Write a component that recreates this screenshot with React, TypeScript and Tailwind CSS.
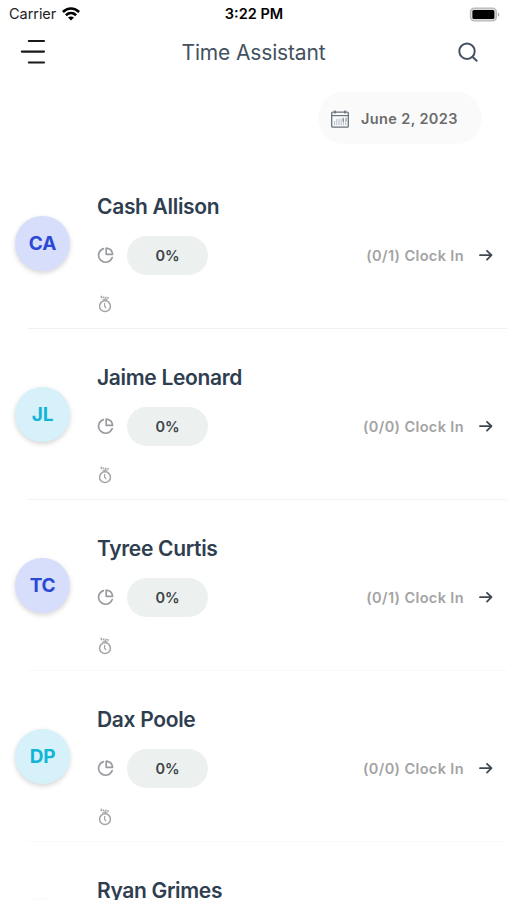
type Employee = {
  name: string
  initials: string
  clock: string
  avatar: string
  divider: string
}

const blue = 'bg-[#d6defb] text-[#2b48d4]'
const cyan = 'bg-[#d6f1fa] text-[#12b5d6]'

const employees: Employee[] = [
  { name: 'Cash Allison', initials: 'CA', clock: '(0/1) Clock In', avatar: blue, divider: 'bg-[#f0f0f0]' },
  { name: 'Jaime Leonard', initials: 'JL', clock: '(0/0) Clock In', avatar: cyan, divider: 'bg-[#f2f2f2]' },
  { name: 'Tyree Curtis', initials: 'TC', clock: '(0/1) Clock In', avatar: blue, divider: 'bg-[#f9f9f9]' },
  { name: 'Dax Poole', initials: 'DP', clock: '(0/0) Clock In', avatar: cyan, divider: 'bg-[#fafafa]' },
  { name: 'Ryan Grimes', initials: 'RG', clock: '(0/1) Clock In', avatar: blue, divider: 'bg-[#fafafa]' },
]

const WifiIcon = () => (
  <svg width="18" height="14" viewBox="0 0 18 14" fill="none" stroke="#000" strokeWidth="2.6">
    <path d="M.9 5C5.6.3 12.4.3 17.1 5" />
    <path d="M3.9 8.2c3-2.8 7.2-2.8 10.2 0" />
    <path d="M9 13.6 6 10.6c1.7-1.5 4.3-1.5 6 0Z" fill="#000" stroke="none" />
  </svg>
)

const BatteryIcon = () => (
  <svg width="31" height="15" viewBox="0 0 31 15">
    <rect x="1.4" y="1.1" width="26" height="12.8" rx="4" fill="#d9d9d9" stroke="#b8b8b8" strokeWidth="1.2" />
    <rect x="3.4" y="3" width="22" height="9" rx="1.6" fill="#000" />
    <path d="M28.9 5.2c1.8.8 1.8 3.8 0 4.6Z" fill="#a8a8a8" />
  </svg>
)

const MenuIcon = () => (
  <svg width="26" height="26" viewBox="0 0 26 26" stroke="#17191c" strokeWidth="2.1" strokeLinecap="round">
    <path d="M8.8 2h15.2M1.8 12.6H24M8.8 23.5h15.2" />
  </svg>
)

const SearchIcon = () => (
  <svg width="20" height="20" viewBox="0 0 20 20" fill="none" stroke="#435160" strokeWidth="2">
    <circle cx="9" cy="9.2" r="7.7" />
    <path d="m14.5 14.8 4.1 3.9" strokeLinecap="round" />
  </svg>
)

const CalendarIcon = () => (
  <svg width="18" height="18" viewBox="0 0 18 18" fill="none" stroke="#66727d">
    <rect x="0.7" y="2.2" width="16.6" height="15" rx="1" strokeWidth="1.3" />
    <path d="M.6 5.6h16.8" strokeWidth="1.2" />
    <path d="M4 .5v3M14 .5v3" strokeWidth="1.6" />
    <path d="M3.6 11v4.2M5.8 9v6.2M8 8.4v6.8M10.2 8.4v6.8M12.4 8.4v6.8M14.6 12.5v2.7" strokeWidth="1.1" stroke="#bcc4ca" />
    <path d="M12.2 7.8v4M15 7.8v4" strokeWidth=".9" />
  </svg>
)

const PieIcon = () => (
  <svg width="17" height="17" viewBox="0 0 17 17" fill="none" stroke="#999b9e" strokeWidth="1.7" strokeLinejoin="round" strokeLinecap="round">
    <path d="M6.3 1.6A7 7 0 1 0 15.2 10.5" />
    <path d="M9.2 1.1c3.6.3 6.1 2.7 6.4 6.2H9.2Z" />
  </svg>
)

const StopwatchIcon = () => (
  <svg width="14" height="18" viewBox="0 0 14 18" fill="none" stroke="#a3a5a7" strokeWidth="1.5">
    <circle cx="7" cy="11.2" r="5.4" />
    <path d="M6.6 8v3.2l1.6 2" strokeWidth="1.2" />
    <path d="M4.4 4.8h5.2M7.2 3v2.4" strokeWidth="1.2" />
    <path d="M3.4.8v2.4M5.6 1.4v1.8M7.9 1.8v1.8M10 2v1.8" strokeWidth="1.5" />
  </svg>
)

const ArrowIcon = () => (
  <svg width="14" height="12" viewBox="0 0 14 12" fill="none" stroke="#3f4750" strokeWidth="1.8" strokeLinecap="round" strokeLinejoin="round">
    <path d="M1 6.2h11.2M8 1.8l4.5 4.4L8 10.6" />
  </svg>
)

const StatusBar = () => (
  <div className="grid h-7 grid-cols-3 items-center pl-[9px] pr-[7px] text-black">
    <div className="flex items-center gap-1.5">
      <span className="text-[14.5px] tracking-[-0.05px] text-[#222]">Carrier</span>
      <WifiIcon />
    </div>
    <span className="-ml-px text-center text-[14.5px] font-semibold">3:22 PM</span>
    <div className="flex justify-end">
      <BatteryIcon />
    </div>
  </div>
)

const Header = () => (
  <header className="flex h-12 items-center justify-between pl-5 pr-[29px]">
    <button aria-label="Menu">
      <MenuIcon />
    </button>
    <h1 className="pt-0.5 pl-[3px] text-[21px] tracking-[-0.15px] text-[#435160]">Time Assistant</h1>
    <button aria-label="Search">
      <SearchIcon />
    </button>
  </header>
)

const EmployeeRow = ({ employee }: { employee: Employee }) => (
  <li className="flex h-[171px] flex-col">
    <div className="flex flex-1 pl-[15px] pr-3.5">
      <div className={`mt-[58px] flex size-[55px] shrink-0 items-center justify-center rounded-full pt-px text-[19px] font-bold tracking-[-0.2px] shadow-[0_2px_5px_rgba(0,0,0,0.17)] ${employee.avatar}`}>
        {employee.initials}
      </div>
      <div className="ml-[27px] flex flex-1 flex-col pt-[35px]">
        <h2 className="h-7 text-[21px] leading-7 font-semibold tracking-[-0.32px] text-[#2f3e4f]">{employee.name}</h2>
        <div className="mt-3.5 flex h-10 items-center">
          <PieIcon />
          <span className="ml-[13px] flex h-[39px] w-[81px] items-center justify-center rounded-full bg-[#ecf1f0] pt-px text-[14.5px] font-semibold text-[#3c4447]">0%</span>
          <span className="ml-auto pt-px text-[14.5px] font-semibold tracking-[0.38px] text-[#a3a3a3]">{employee.clock}</span>
          <span className="ml-[15px]">
            <ArrowIcon />
          </span>
        </div>
        <div className="mt-5 ml-px">
          <StopwatchIcon />
        </div>
      </div>
    </div>
    <div className={`ml-7 h-px ${employee.divider}`} />
  </li>
)

const App = () => {
  return (
    <main className="h-[900px] overflow-hidden bg-white font-['Inter','Liberation_Sans',sans-serif]">
      <StatusBar />
      <Header />
      <div className="flex justify-end pt-4 pr-[25px] pb-3.5">
        <button className="flex h-[52px] w-[164px] items-center gap-3 rounded-[26px] bg-[#fafafa] pt-px pl-[13px] text-[14.5px] font-semibold tracking-[0.38px] text-[#6b6b6b]">
          <CalendarIcon />
          June 2, 2023
        </button>
      </div>
      <ul>
        {employees.map((employee) => (
          <EmployeeRow key={employee.name} employee={employee} />
        ))}
      </ul>
    </main>
  )
}

export default App
